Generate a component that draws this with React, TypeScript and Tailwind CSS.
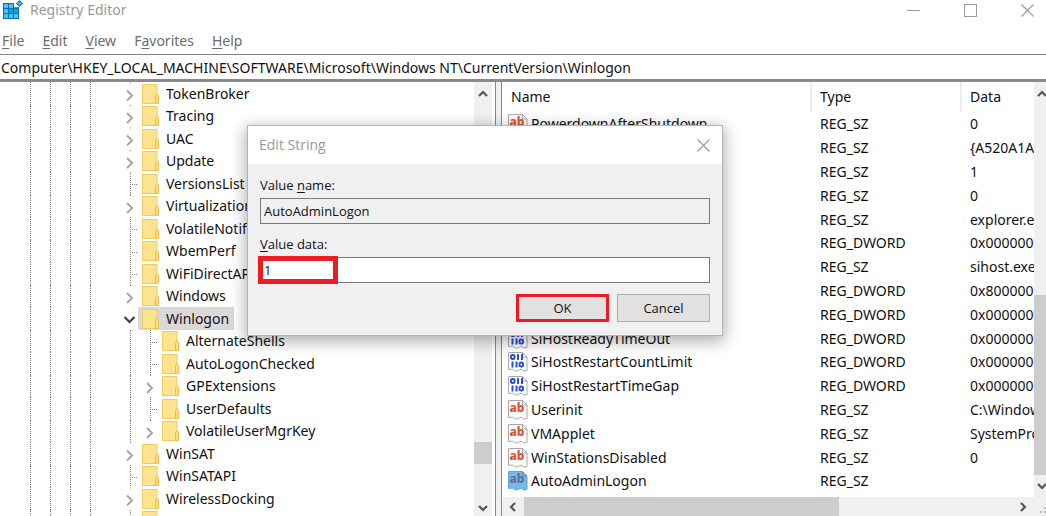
import { useState } from 'react';
import clsx from 'clsx';

interface TreeNode {
  name: string;
  child?: boolean;
  expandable?: boolean;
  open?: boolean;
}

interface RegistryValue {
  name: string;
  kind: 'string' | 'binary';
  type: string;
  data: string;
}

const tree: TreeNode[] = [
  { name: 'TokenBroker', expandable: true },
  { name: 'Tracing', expandable: true },
  { name: 'UAC', expandable: true },
  { name: 'Update', expandable: true },
  { name: 'VersionsList' },
  { name: 'Virtualization', expandable: true },
  { name: 'VolatileNotifications' },
  { name: 'WbemPerf' },
  { name: 'WiFiDirectAPI' },
  { name: 'Windows', expandable: true },
  { name: 'Winlogon', expandable: true, open: true },
  { name: 'AlternateShells', child: true },
  { name: 'AutoLogonChecked', child: true },
  { name: 'GPExtensions', child: true, expandable: true },
  { name: 'UserDefaults', child: true },
  { name: 'VolatileUserMgrKey', child: true, expandable: true },
  { name: 'WinSAT', expandable: true },
  { name: 'WinSATAPI' },
  { name: 'WirelessDocking', expandable: true },
  { name: 'WOF' },
];

const values: RegistryValue[] = [
  { name: 'PowerdownAfterShutdown', kind: 'string', type: 'REG_SZ', data: '0' },
  { name: 'PreCreateKnownFolders', kind: 'string', type: 'REG_SZ', data: '{A520A1A4' },
  { name: 'ReportBootOk', kind: 'string', type: 'REG_SZ', data: '1' },
  { name: 'scremoveoption', kind: 'string', type: 'REG_SZ', data: '0' },
  { name: 'Shell', kind: 'string', type: 'REG_SZ', data: 'explorer.exe' },
  { name: 'ShellCritical', kind: 'binary', type: 'REG_DWORD', data: '0x00000000' },
  { name: 'ShellInfrastructure', kind: 'string', type: 'REG_SZ', data: 'sihost.exe' },
  { name: 'ShutdownFlags', kind: 'binary', type: 'REG_DWORD', data: '0x80000027' },
  { name: 'SiHostCritical', kind: 'binary', type: 'REG_DWORD', data: '0x00000000' },
  { name: 'SiHostReadyTimeOut', kind: 'binary', type: 'REG_DWORD', data: '0x00000000' },
  { name: 'SiHostRestartCountLimit', kind: 'binary', type: 'REG_DWORD', data: '0x00000000' },
  { name: 'SiHostRestartTimeGap', kind: 'binary', type: 'REG_DWORD', data: '0x00000000' },
  { name: 'Userinit', kind: 'string', type: 'REG_SZ', data: 'C:\\Windows' },
  { name: 'VMApplet', kind: 'string', type: 'REG_SZ', data: 'SystemProp' },
  { name: 'WinStationsDisabled', kind: 'string', type: 'REG_SZ', data: '0' },
  { name: 'AutoAdminLogon', kind: 'string', type: 'REG_SZ', data: '' },
];

const menus = [
  ['', 'F', 'ile'],
  ['', 'E', 'dit'],
  ['', 'V', 'iew'],
  ['F', 'a', 'vorites'],
  ['', 'H', 'elp'],
];

function RegeditIcon() {
  const cells = [0, 1, 2];
  return (
    <svg className="h-5 w-5 shrink-0" viewBox="0 0 20 20">
      <rect x="0" y="3" width="16" height="16" fill="#0a6ea8" />
      {cells.map(r =>
        cells.map(c => (
          <rect
            key={`${r}${c}`}
            x={1 + c * 5}
            y={4 + r * 5}
            width="4"
            height="4"
            fill={(r === 0 && c < 2) || (c === 0 && r === 1) || r === 2 ? '#45c5f5' : '#1b9fe0'}
          />
        ))
      )}
      <rect x="11" y="2" width="6" height="5" fill="#fff" />
      <path d="M16.500 0l3.500 3.500L16.500 7 13 3.500z" fill="#0f7ab8" />
      <path d="M16.500 1.600l2 1.900-2 1.900-2-1.900z" fill="#4fb6e8" />
    </svg>
  );
}

function CloseIcon() {
  return (
    <svg className="h-[13px] w-[13px]" viewBox="0 0 13 13" stroke="#999" strokeWidth="1.1">
      <path d="M.5.5l12 12M12.500.5l-12 12" />
    </svg>
  );
}

function FolderIcon() {
  return (
    <svg className="h-5 w-[17px] shrink-0" viewBox="0 0 17 20">
      <rect x=".5" y=".5" width="14.500" height="19" fill="#ffe391" stroke="#efcc62" />
      <path d="M13.500 19.500v-8l1-1.500h1l1 1.500v8z" fill="#ffdf80" stroke="#e8bf45" />
    </svg>
  );
}

function Branch({ node }: { node: TreeNode }) {
  if (node.open) {
    return (
      <svg className="h-full w-[18px] shrink-0" viewBox="0 0 18 22" fill="none">
        <path d="M4.500 9.500l5 5 5-5" stroke="#404040" strokeWidth="2.200" />
      </svg>
    );
  }
  if (node.expandable) {
    return (
      <svg className="h-full w-[18px] shrink-0" viewBox="0 0 18 22" fill="none">
        <path d="M10 0h1v1h-1z" fill="#808080" />
        <path d="M7 8l5 5-5 5" stroke="#a6a6a6" strokeWidth="2" />
      </svg>
    );
  }
  return (
    <svg className="h-full w-[18px] shrink-0" stroke="#808080" strokeDasharray="1 1">
      <line x1="10.500" y1="0" x2="10.500" y2="100%" />
      <line x1="12" y1="12.500" x2="18" y2="12.500" />
    </svg>
  );
}

function ValueIcon({ kind, selected }: { kind: RegistryValue['kind']; selected: boolean }) {
  return (
    <svg className="h-5 w-5 shrink-0" viewBox="0 0 20 20">
      <path
        d="M.5.5h14l4.500 4.500v13.500l-3 .5-3-2-2.500 1.500-3 .5-3-2-4 .5z"
        fill={selected ? '#76b9ed' : '#fff'}
        stroke={selected ? '#5ba3dc' : '#a8a8a8'}
      />
      <path d="M14.500.5v4.500h4.500" fill="none" stroke={selected ? '#4a8fc8' : '#a8a8a8'} />
      {kind === 'string' ? (
        <text
          x="9"
          y="12"
          textAnchor="middle"
          fontSize="12"
          fontWeight="800"
          fill={selected ? '#6b6f8f' : '#dd5230'}
        >
          ab
        </text>
      ) : (
        <g fill="none" stroke="#2b50d8" strokeWidth="2">
          <rect x="3" y="3" width="3.500" height="4" rx="1.500" />
          <path d="M10 2v6M14 2v6M4.500 9.500v6M8.500 9.500v6" />
          <rect x="11.500" y="10.500" width="3.500" height="4" rx="1.500" />
        </g>
      )}
    </svg>
  );
}

const arrows = {
  up: 'M2 8l4-4 4 4',
  down: 'M2 4l4 4 4-4',
  left: 'M8 2L4 6l4 4',
  right: 'M4 2l4 4-4 4',
};

function ScrollButton({ dir, className }: { dir: keyof typeof arrows; className: string }) {
  return (
    <button
      type="button"
      aria-label={`Scroll ${dir}`}
      className={clsx('flex shrink-0 items-center justify-center', className)}
    >
      <svg className="h-3 w-3 shrink-0" viewBox="0 0 12 12" fill="none" stroke="#555" strokeWidth="2.200">
        <path d={arrows[dir]} />
      </svg>
    </button>
  );
}

function KeyTree() {
  const [selected, setSelected] = useState('Winlogon');

  return (
    <div className="flex w-[496px] shrink-0 border-r border-[#828790] pr-[3px]">
      <ul className="min-w-0 flex-1 overflow-hidden">
        {tree.map(node => (
          <li key={node.name} className="flex items-stretch pl-[30px] odd:h-[23px] even:h-[22px]">
            <span className="w-5 shrink-0 border-l border-dotted border-[#808080]" />
            <span className="w-5 shrink-0 border-l border-dotted border-[#808080]" />
            <span className="w-5 shrink-0 border-l border-dotted border-[#808080]" />
            <span className="w-[30px] shrink-0 border-l border-dotted border-[#808080]" />
            {node.child && (
              <span className="flex w-5 shrink-0 justify-end">
                <span className="w-[10px] border-l border-dotted border-[#808080]" />
              </span>
            )}
            <Branch node={node} />
            <button
              type="button"
              onClick={() => setSelected(node.name)}
              className={clsx(
                'flex items-center gap-[7px] pr-[5px] pl-1 whitespace-nowrap',
                selected === node.name && 'bg-[#d9d9d9]'
              )}
            >
              <FolderIcon />
              {node.name}
            </button>
          </li>
        ))}
      </ul>
      <div className="flex w-[18px] shrink-0 flex-col bg-[#f0f0f0]">
        <ScrollButton dir="up" className="h-6" />
        <div className="flex-[335]" />
        <div className="flex-[22] bg-[#cdcdcd]" />
        <div className="flex-[36]" />
        <ScrollButton dir="down" className="h-4" />
      </div>
    </div>
  );
}

function ValueList() {
  return (
    <div className="flex min-w-0 flex-1 flex-col border-l border-[#828790]">
      <div className="flex min-h-0 flex-1">
        <div className="min-w-0 flex-1 overflow-hidden">
          <table className="w-full table-fixed border-separate border-spacing-0 text-left">
            <thead>
              <tr className="h-[30px]">
                <th className="w-[310px] border-r-2 border-[#ececec] p-0 pl-[9px] font-normal">Name</th>
                <th className="w-[150px] border-r-2 border-[#ececec] p-0 pl-2 font-normal">Type</th>
                <th className="p-0 pl-2 font-normal">Data</th>
              </tr>
            </thead>
            <tbody>
              {values.map(value => (
                <tr key={value.name} className="h-6 [&:nth-child(5n)]:h-[23px]">
                  <td className="p-0 pl-1.5">
                    <span className="flex h-5 items-center gap-[3px] whitespace-nowrap">
                      <ValueIcon kind={value.kind} selected={value.name === 'AutoAdminLogon'} />
                      {value.name}
                    </span>
                  </td>
                  <td className="p-0 pl-2 whitespace-nowrap">{value.type}</td>
                  <td className="overflow-hidden p-0 pl-2 whitespace-nowrap">{value.data}</td>
                </tr>
              ))}
            </tbody>
          </table>
        </div>
        <div className="flex w-3 shrink-0 flex-col overflow-hidden bg-[#f0f0f0]">
          <ScrollButton dir="up" className="h-6 w-4" />
          <div className="flex-[189]" />
          <div className="flex-[180] bg-[#cdcdcd]" />
          <ScrollButton dir="down" className="h-[22px] w-4" />
        </div>
      </div>
      <div className="flex h-[19px] shrink-0 bg-[#f0f0f0]">
        <ScrollButton dir="left" className="w-[22px]" />
        <div className="flex-[314] bg-[#cdcdcd]" />
        <div className="flex-[173]" />
        <ScrollButton dir="right" className="w-[22px]" />
        <svg className="h-[19px] w-3 shrink-0" viewBox="0 0 12 19" fill="#bfbfbf">
          <path d="M10 10h2v2h-2zM6 14h2v2H6zM10 14h2v2h-2z" />
        </svg>
      </div>
    </div>
  );
}

function EditStringDialog() {
  const [data, setData] = useState('1');

  return (
    <form
      role="dialog"
      aria-labelledby="dialog-title"
      onSubmit={e => e.preventDefault()}
      className="absolute top-[125px] left-[247px] w-[476px] border border-[#b4b4b4] bg-[#f0f0f0] font-['Open_Sans','Noto_Sans',sans-serif] text-[13px] shadow-[0_4px_14px_2px_rgba(0,0,0,0.3)]"
    >
      <div className="flex h-[38px] items-center justify-between bg-white pr-3 pl-[11px]">
        <h2 id="dialog-title" className="text-[14px] text-[#999]">
          Edit String
        </h2>
        <button type="button" aria-label="Close dialog">
          <CloseIcon />
        </button>
      </div>
      <div className="flex flex-col px-3 pt-3 pb-[13px]">
        <label htmlFor="value-name" className="h-[22px] leading-[18px]">
          Value <u className="underline-offset-2">n</u>ame:
        </label>
        <input
          id="value-name"
          readOnly
          value="AutoAdminLogon"
          className="h-[26px] w-full border border-[#7a7a7a] bg-[#f0f0f0] px-[3px] outline-none"
        />
        <label htmlFor="value-data" className="mt-[11px] h-[22px] leading-[18px]">
          <u className="underline-offset-2">V</u>alue data:
        </label>
        <div className="relative">
          <input
            id="value-data"
            value={data}
            onChange={e => setData(e.target.value)}
            className="block h-[26px] w-full border border-[#7a7a7a] bg-white px-[3px] outline-none"
          />
          <span className="pointer-events-none absolute -top-px -left-0.5 h-7 w-20 border-[5px] border-[#ed1c24]" />
        </div>
        <div className="mt-[11px] flex justify-end gap-2">
          <button type="submit" className="h-7 w-[93px] border-[3px] border-[#ed1c24] bg-[#e1e1e1]">
            OK
          </button>
          <button type="button" className="h-7 w-[93px] border border-[#adadad] bg-[#e1e1e1]">
            Cancel
          </button>
        </div>
      </div>
    </form>
  );
}

export default function App() {
  return (
    <div className="relative flex h-screen flex-col overflow-hidden bg-white font-['Noto_Sans','Open_Sans',sans-serif] text-[14px] leading-5 text-[#111]">
      <header className="flex h-5 shrink-0 items-center justify-between pr-3 pl-[3px]">
        <div className="flex items-center gap-[7px]">
          <RegeditIcon />
          <h1 className="text-[#999]">Registry Editor</h1>
        </div>
        <div className="flex items-center gap-11">
          <button type="button" aria-label="Minimize">
            <svg className="h-[13px] w-[13px]" viewBox="0 0 13 13" stroke="#999">
              <path d="M0 6.500h13" />
            </svg>
          </button>
          <button type="button" aria-label="Maximize">
            <svg className="h-[13px] w-[13px]" viewBox="0 0 13 13" fill="none" stroke="#999">
              <rect x=".5" y=".5" width="12" height="12" />
            </svg>
          </button>
          <button type="button" aria-label="Close">
            <CloseIcon />
          </button>
        </div>
      </header>
      <nav className="flex h-[34px] shrink-0 items-center gap-[18px] pt-2 pl-0.5 text-[#6d6d6d]">
        {menus.map(([before, key, after]) => (
          <button key={before + key + after} type="button">
            {before}
            <u className="underline-offset-2">{key}</u>
            {after}
          </button>
        ))}
      </nav>
      <input
        aria-label="Address"
        readOnly
        value="Computer\HKEY_LOCAL_MACHINE\SOFTWARE\Microsoft\Windows NT\CurrentVersion\Winlogon"
        className="h-[25px] w-full shrink-0 border-t border-[#828282] px-px outline-none"
      />
      <main className="flex min-h-0 flex-1 gap-[5px] border-t-3 border-[#8a8a8c] bg-[#f0f0f0] *:bg-white">
        <KeyTree />
        <ValueList />
      </main>
      <EditStringDialog />
    </div>
  );
}
